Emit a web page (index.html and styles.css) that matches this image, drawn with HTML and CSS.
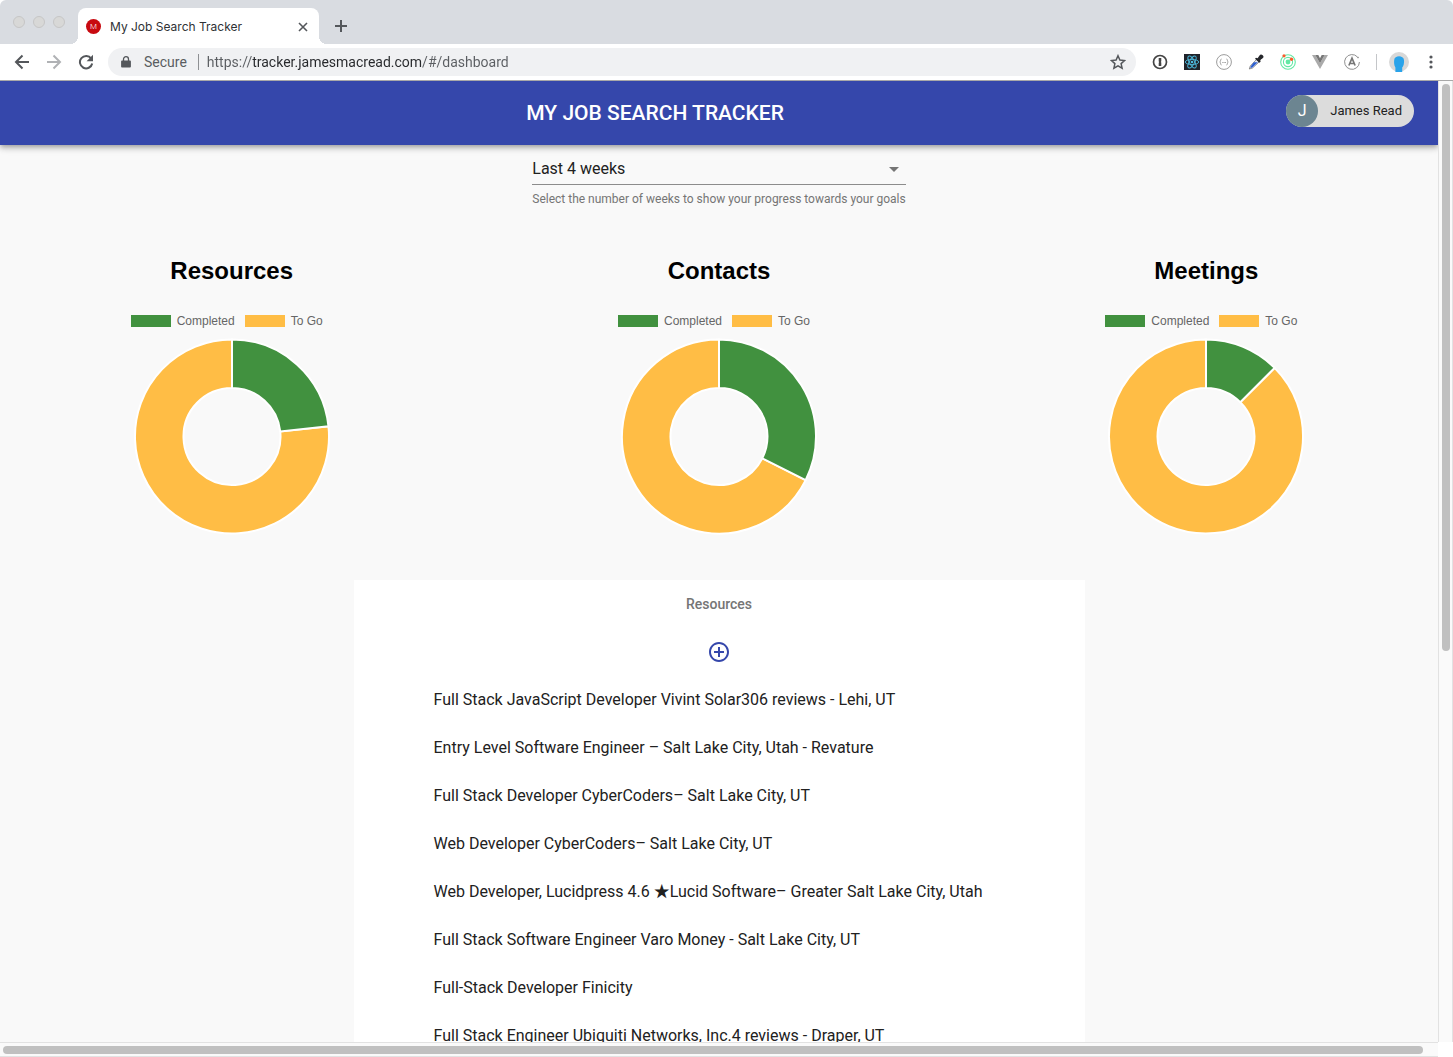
FILE: index.html
```html
<!DOCTYPE html>
<html lang="en">
<head>
<meta charset="utf-8">
<title>My Job Search Tracker</title>
<link rel="stylesheet" href="styles.css">
</head>
<body>
<div class="window">
  <div class="tabstrip">
    <div class="lights"><span class="light"></span><span class="light"></span><span class="light"></span></div>
    <div class="tab">
      <span class="favicon">M</span>
      <span class="tab-title">My Job Search Tracker</span>
      <button class="icon-btn tab-close" aria-label="Close tab"><svg width="10" height="10" viewBox="0 0 10 10"><path d="M1 1l8 8M9 1l-8 8" stroke="#54575b" stroke-width="1.6"/></svg></button>
    </div>
    <button class="icon-btn new-tab" aria-label="New tab"><svg width="14" height="14" viewBox="0 0 14 14"><path d="M7 1v12M1 7h12" stroke="#54575b" stroke-width="2"/></svg></button>
  </div>

  <div class="toolbar">
    <button class="icon-btn nav-btn" aria-label="Back"><svg width="16" height="16" viewBox="0 0 16 16" fill="none" stroke="#54575b" stroke-width="2"><path d="M15 8H2M8.500 1.500L2 8l6.500 6.500"/></svg></button>
    <button class="icon-btn nav-btn" aria-label="Forward"><svg width="16" height="16" viewBox="0 0 16 16" fill="none" stroke="#b0b2b5" stroke-width="2"><path d="M1 8h13M7.500 1.500L14 8l-6.500 6.500"/></svg></button>
    <button class="icon-btn nav-btn" aria-label="Reload"><svg width="16" height="16" viewBox="0 0 16 16"><path d="M13.200 4.600A6.200 6.200 0 1 0 14.200 9.500" fill="none" stroke="#54575b" stroke-width="2"/><path d="M15 .8v6.400H8.600z" fill="#54575b"/></svg></button>
    <div class="omnibox">
      <svg class="lock" width="10" height="12" viewBox="0 0 10 12"><path d="M1 4.500h8a.9.9 0 0 1 .9.9v5.200a.9.9 0 0 1-.9.900H1a.9.9 0 0 1-.9-.9V5.400A.9.9 0 0 1 1 4.500z" fill="#54575b"/><path d="M2.500 5V3.200a2.500 2.500 0 0 1 5 0V5" fill="none" stroke="#54575b" stroke-width="1.300"/></svg>
      <span class="secure">Secure</span>
      <input class="url" type="text" aria-label="Address" value="https://tracker.jamesmacread.com/#/dashboard">
      <button class="icon-btn star" aria-label="Bookmark this page"><svg width="16" height="16" viewBox="0 0 16 16"><path d="M8 1.700l1.900 4.300 4.700.5-3.500 3.100 1 4.600L8 11.800l-4.100 2.400 1-4.600L1.400 6.500l4.700-.5z" fill="none" stroke="#54575b" stroke-width="1.500"/></svg></button>
    </div>
    <div class="extensions">
      <button class="icon-btn ext" aria-label="Passwords"><svg width="16" height="16" viewBox="0 0 16 16"><circle cx="8" cy="8" r="6.500" fill="none" stroke="#444" stroke-width="1.700"/><path d="M6.700 4h2.600v3.200L8.800 8l.5.600V12H6.700V8.800L7.200 8l-.5-.6z" fill="#444"/></svg></button>
      <button class="icon-btn ext" aria-label="React tools"><svg width="16" height="16" viewBox="0 0 16 16"><path d="M0 0h16v16H0z" fill="#20232a"/><g fill="none" stroke="#4db9dc" stroke-width=".9"><ellipse cx="8" cy="8" rx="6.700" ry="2.600"/><ellipse cx="8" cy="8" rx="6.700" ry="2.600" transform="rotate(60 8 8)"/><ellipse cx="8" cy="8" rx="6.700" ry="2.600" transform="rotate(120 8 8)"/></g><circle cx="8" cy="8" r="1.300" fill="#4db9dc"/></svg></button>
      <button class="icon-btn ext" aria-label="JSON viewer"><svg width="16" height="16" viewBox="0 0 16 16" fill="none" stroke="#9c9c9c"><circle cx="8" cy="8" r="7.400"/><path d="M5.500 5c-1.300 0-.5 2.500-1.800 3 1.300.5.500 3 1.800 3M10.500 5c1.300 0 .5 2.500 1.800 3-1.300.5-.5 3-1.800 3"/><path d="M6.300 8.500h3.600" stroke-dasharray="1 .3"/></svg></button>
      <button class="icon-btn ext" aria-label="Color picker"><svg width="16" height="16" viewBox="0 0 16 16"><path d="M8.500 5.500l2.500 2.500-6.500 6-3.200 1 1-3z" fill="#e8ecf8" stroke="#777" stroke-width=".8"/><path d="M5.800 8.300h4L4.300 13.600l-2 .5.700-2z" fill="#2d5fd0"/><path d="M8 3.800l1.600.4 2.100-3c1.300-1.800 4.700.5 3.600 2.300-.4.700-1.900 1.500-3 2.700l.3 1.500-1.300 1.100L7 4.800z" fill="#26282c"/></svg></button>
      <button class="icon-btn ext" aria-label="Radar"><svg width="16" height="16" viewBox="0 0 16 16"><g fill="none" stroke="#62e8a4" stroke-width="1.100"><circle cx="8" cy="8" r="7.300"/><circle cx="8" cy="8" r="4.600"/></g><circle cx="8" cy="8" r="2.400" fill="#62e8a4"/><circle cx="4" cy="1.800" r="1.600" fill="#fb5b2b"/><circle cx="11.500" cy="5.200" r="1.700" fill="#fb5b2b"/></svg></button>
      <button class="icon-btn ext" aria-label="Vue tools"><svg width="16" height="16" viewBox="0 0 16 16"><path d="M0 1h3.300L8 9.200 12.700 1H16L8 15z" fill="#aaa"/><path d="M3.300 1h3L8 4.200 9.700 1h3L8 9.200z" fill="#777"/></svg></button>
      <button class="icon-btn ext" aria-label="Apollo tools"><svg width="16" height="16" viewBox="0 0 16 16" fill="none" stroke="#8f8f8f"><path d="M13.500 3A7.400 7.400 0 1 0 15.400 8"/><path d="M4.900 11.500L8 4.200l3.100 7.300M6.500 9.500h3.500" stroke="#777" stroke-width="1.700"/><circle cx="14" cy="3.500" r=".5"/></svg></button>
      <span class="divider"></span>
      <button class="icon-btn avatar-btn" aria-label="Profile"><svg width="20" height="20" viewBox="0 0 20 20"><circle cx="10" cy="10" r="10" fill="#d8d8d8"/><path d="M6.400 20v-4.500C5 13 4.900 10.500 5.200 8c.3-5 9.300-5 9.800 0 .3 3-.4 6.500-1.800 7.500V20z" fill="#29a3ea"/></svg></button>
      <button class="icon-btn menu-btn" aria-label="Menu"><svg width="4" height="14" viewBox="0 0 4 14" fill="#54575b"><circle cx="2" cy="2" r="1.600"/><circle cx="2" cy="7" r="1.600"/><circle cx="2" cy="12" r="1.600"/></svg></button>
    </div>
  </div>

  <div class="viewport">
    <div class="page">
      <header class="appbar">
        <h1 class="brand">MY JOB SEARCH TRACKER</h1>
        <button class="chip"><span class="chip-avatar">J</span><span class="chip-label">James Read</span></button>
      </header>
      <main class="content">
        <div class="range">
          <div class="select-wrap">
            <select class="select" id="weeks" aria-describedby="weeks-help" aria-label="Weeks"><option>Last 4 weeks</option></select>
            <svg class="caret" width="10" height="5" viewBox="0 0 10 5"><path d="M0 0h10L5 5z" fill="#757575"/></svg>
          </div>
          <label class="help" id="weeks-help" for="weeks">Select the number of weeks to show your progress towards your goals</label>
        </div>

        <div class="charts">
          <section class="chart">
            <h2 class="chart-title">Resources</h2>
            <div class="legend"><span class="key"><i class="swatch done"></i>Completed</span><span class="key"><i class="swatch todo"></i>To Go</span></div>
            <svg class="donut" width="200" height="200" viewBox="-0.5 -1 201 201">
              <path class="slice-todo" d="M196.960 89.810A97.500 97.500 0 1 1 100 2.500V51.250A48.750 48.750 0 1 0 148.480 94.900z"/>
              <path class="slice-done" d="M100 2.500A97.500 97.500 0 0 1 196.960 89.810L148.480 94.900A48.750 48.750 0 0 0 100 51.250z"/>
            </svg>
          </section>
          <section class="chart">
            <h2 class="chart-title">Contacts</h2>
            <div class="legend"><span class="key"><i class="swatch done"></i>Completed</span><span class="key"><i class="swatch todo"></i>To Go</span></div>
            <svg class="donut" width="200" height="200" viewBox="-0.5 -1 201 201">
              <path class="slice-todo" d="M187.100 143.800A97.500 97.500 0 1 1 100 2.500V51.250A48.750 48.750 0 1 0 143.550 121.900z"/>
              <path class="slice-done" d="M100 2.500A97.500 97.500 0 0 1 187.100 143.800L143.550 121.900A48.750 48.750 0 0 0 100 51.250z"/>
            </svg>
          </section>
          <section class="chart">
            <h2 class="chart-title">Meetings</h2>
            <div class="legend"><span class="key"><i class="swatch done"></i>Completed</span><span class="key"><i class="swatch todo"></i>To Go</span></div>
            <svg class="donut" width="200" height="200" viewBox="-0.5 -1 201 201">
              <path class="slice-todo" d="M168.940 31.060A97.500 97.500 0 1 1 100 2.500V51.250A48.750 48.750 0 1 0 134.470 65.530z"/>
              <path class="slice-done" d="M100 2.500A97.500 97.500 0 0 1 168.940 31.060L134.470 65.530A48.750 48.750 0 0 0 100 51.250z"/>
            </svg>
          </section>
        </div>

        <section class="card">
          <h3 class="card-title">Resources</h3>
          <button class="icon-btn add" aria-label="Add resource"><svg width="24" height="24" viewBox="0 0 24 24"><path d="M13 7h-2v4H7v2h4v4h2v-4h4v-2h-4V7zm-1-5C6.480 2 2 6.480 2 12s4.480 10 10 10 10-4.480 10-10S17.520 2 12 2zm0 18c-4.410 0-8-3.590-8-8s3.590-8 8-8 8 3.590 8 8-3.590 8-8 8z" fill="#3547ab"/></svg></button>
          <ul class="list">
            <li class="item">Full Stack JavaScript Developer Vivint Solar306 reviews - Lehi, UT</li>
            <li class="item">Entry Level Software Engineer – Salt Lake City, Utah - Revature</li>
            <li class="item">Full Stack Developer CyberCoders– Salt Lake City, UT</li>
            <li class="item">Web Developer CyberCoders– Salt Lake City, UT</li>
            <li class="item">Web Developer, Lucidpress 4.6 ★Lucid Software– Greater Salt Lake City, Utah</li>
            <li class="item">Full Stack Software Engineer Varo Money - Salt Lake City, UT</li>
            <li class="item">Full-Stack Developer Finicity</li>
            <li class="item">Full Stack Engineer Ubiquiti Networks, Inc.4 reviews - Draper, UT</li>
          </ul>
        </section>
      </main>
    </div>
    <div class="track-v"><div class="thumb" style="height:59.400%"></div></div>
    <div class="track-h"><div class="thumb" style="width:99.800%"></div></div>
  </div>
</div>
</body>
</html>
```
FILE: styles.css
```css
* { box-sizing: border-box; }
body { margin: 0; background: #fff; font-family: Roboto, "Liberation Sans", sans-serif; }
h1, h2, h3, ul { margin: 0; padding: 0; }

.window { display: flex; flex-direction: column; height: 100vh; overflow: hidden; }
.icon-btn { display: flex; align-items: center; justify-content: center; flex: none; padding: 0; border: 0; background: none; }

/* Tab strip */
.tabstrip { display: flex; flex: none; height: 44px; padding: 8px 8px 0 13px; background: #d9dce1; border-radius: 6px 6px 0 0; }
.lights { display: flex; gap: 8px; width: 65px; padding-top: 8px; }
.light { width: 12px; height: 12px; border: 1px solid #c6c6c6; border-radius: 50%; background: #d8d8d7; }
.tab { position: relative; display: flex; align-items: center; width: 241px; padding: 1px 8px 0; background: #fff; border-radius: 8px 8px 0 0; }
.tab::before, .tab::after { content: ""; position: absolute; bottom: 0; width: 8px; height: 8px; }
.tab::before { left: -8px; background: radial-gradient(circle at 0 0, #d9dce1 8px, #fff 8px); }
.tab::after { right: -8px; background: radial-gradient(circle at 100% 0, #d9dce1 8px, #fff 8px); }
.favicon { width: 15px; height: 15px; border-radius: 50%; background: #c80a10; color: #fff; font-size: 8px; font-weight: 300; line-height: 15px; text-align: center; }
.tab-title { flex: 1; margin-left: 9px; font: 12px/16px Inter, "Liberation Sans", sans-serif; color: #2f3235; }
.tab-close { width: 16px; height: 16px; }
.new-tab { width: 28px; height: 36px; margin-left: 8px; }

/* Toolbar */
.toolbar { display: flex; align-items: center; flex: none; height: 37px; padding: 0 12px 0 6px; border-bottom: 1px solid #a9a9a9; background: #fff; }
.nav-btn { width: 32px; height: 32px; }
.omnibox { display: flex; align-items: center; flex: 1; height: 28px; margin-left: 6px; padding: 0 10px 0 13px; border-radius: 14px; background: #f0f1f3; font-size: 14px; }
.secure { margin-left: 13px; padding-right: 11px; border-right: 1px solid #8e9093; line-height: 16px; color: #5a5d61; }
.url { flex: 1; min-width: 0; margin-left: 8px; padding: 0; border: 0; outline: 0; background: linear-gradient(90deg, #5a5d61 46px, #26282b 46px 215px, #5a5d61 215px); background-clip: text; color: transparent; font: inherit; }
.extensions { display: flex; align-items: center; margin-left: 8px; }
.ext { width: 32px; height: 32px; }
.divider { width: 1px; height: 16px; margin-left: 8px; background: #c4c6c9; }
.avatar-btn { width: 20px; height: 20px; margin: 0 12px; }
.menu-btn { width: 20px; height: 20px; }

/* Page viewport with its scrollbars */
.viewport { display: grid; flex: 1; grid-template: minmax(0, 1fr) 15px / minmax(0, 1fr) 15px; min-height: 0; }
.page { overflow: hidden; background: #f9f9f9; }
.track-v { padding: 3px 2px 3px 3px; border: solid #e2e2e2; border-width: 0 1px; background: #fafafa; }
.track-h { padding: 3px 12px 2px 3px; border: solid #e2e2e2; border-width: 1px 0; background: #fafafa; }
.track-h .thumb { height: 8px; }
.thumb { border-radius: 4px; background: #c0c0c0; }

/* App bar */
.appbar { position: relative; display: flex; align-items: center; height: 64px; padding: 0 24px; background: #3547ab; box-shadow: 0 2px 4px -1px rgba(0,0,0,.2), 0 4px 5px rgba(0,0,0,.14), 0 1px 10px rgba(0,0,0,.12); }
.brand { flex: 1; text-align: center; font-size: 21px; font-weight: 500; line-height: 24px; color: #fff; }
.chip { display: flex; align-items: center; height: 32px; margin-bottom: 4px; padding: 0; border: 0; border-radius: 16px; background: #dcdcdc; font: 13px/16px Roboto, sans-serif; color: #222; }
.chip-avatar { width: 32px; border-radius: 50%; background: #6c8591; color: #fff; font-size: 16px; line-height: 32px; }
.chip-label { padding: 0 12px; }

/* Range picker */
.content { padding-top: 8px; overflow: hidden; }
.range { width: fit-content; margin: 0 auto; }
.select-wrap { display: flex; position: relative; }
.select { width: 100%; height: 32px; padding: 0; border: 0; border-bottom: 1px solid #8c8c8c; border-radius: 0; appearance: none; background: none; font: 16px/19px Roboto, sans-serif; color: #212121; }
.caret { position: absolute; right: 7px; top: 14px; pointer-events: none; }
.help { display: block; margin-top: 8px; font-size: 12px; line-height: 12px; color: #757575; }

/* Charts */
.charts { display: grid; grid-template-columns: repeat(3, 1fr); margin: 52px -12px 0; }
.chart { display: flex; flex-direction: column; align-items: center; }
.chart-title { font: bold 24px/28px "Liberation Sans", sans-serif; color: #000; }
.legend { display: flex; margin-top: 30px; font: 12px/12px "Liberation Sans", sans-serif; color: #666; }
.key { display: flex; gap: 6px; padding-right: 10px; }
.swatch { width: 40px; height: 12px; }
.done { background: #41913f; }
.todo { background: #ffbd45; }
.donut { margin-top: 9px; stroke: #fff; stroke-width: 2; }
.slice-done { fill: #41913f; }
.slice-todo { fill: #ffbd45; }

/* Resource list */
.card { display: flex; flex-direction: column; align-items: center; width: calc(50% + 12px); margin: 44px auto 0; background: #fff; }
.card-title { font-size: 14px; font-weight: 500; line-height: 48px; color: #757575; }
.add { width: 48px; height: 48px; }
.list { align-self: stretch; padding: 0 80px; list-style: none; }
.item { font: 16px/48px Roboto, "Noto Sans CJK JP", sans-serif; white-space: nowrap; color: #212121; }
```
